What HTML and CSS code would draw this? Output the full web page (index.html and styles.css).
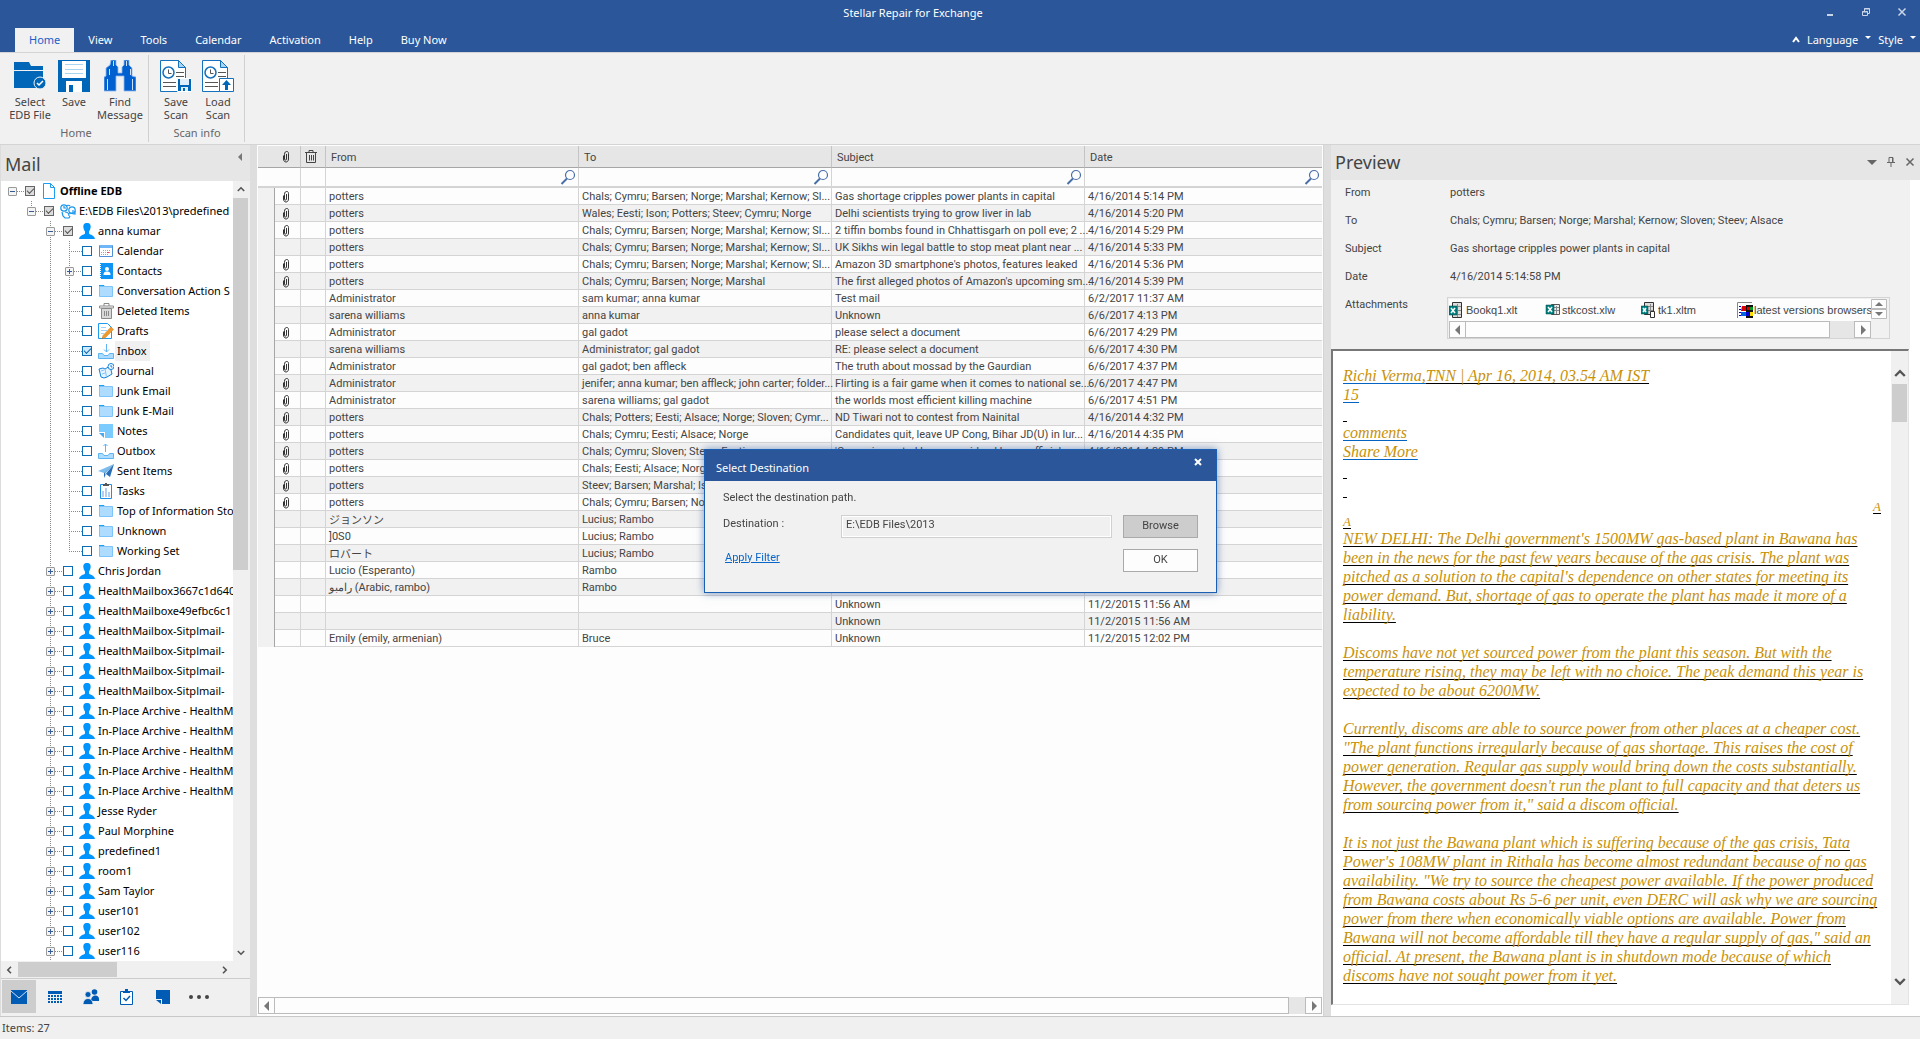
FILE: index.html
```html
<!DOCTYPE html>
<html lang="en">
<head>
<meta charset="utf-8">
<title>Stellar Repair for Exchange</title>
<link rel="stylesheet" href="styles.css">
</head>
<body>
<svg class="defs" aria-hidden="true">
  <symbol id="user" viewBox="0 0 16 16"><path fill="#0094ff" d="M8 0c3 0 4 2 3.600 4.500C11.400 6.500 10.500 7.500 10 8.500v2c1 1.500 5.500 1.500 6 5.500H0c.5-4 5-4 6-5.500v-2C5.500 7.500 4.600 6.500 4.400 4.500 4 2 5 0 8 0z"/></symbol>
  <symbol id="folder" viewBox="0 0 16 16"><path fill="#1e9df0" d="M1 2h5l1 2H1z"/><path fill="#addcff" stroke="#7cc4fa" d="M1.500 3.500h13v10h-13z"/></symbol>
  <symbol id="doc" viewBox="0 0 16 16"><path fill="#fff" stroke="#1e9df0" d="M2.500.5h7l4 4v11H2.500zM9.500.5v4h4"/></symbol>
  <symbol id="store" viewBox="0 0 16 16"><g fill="none" stroke="#1a96ee" stroke-width="1.200"><circle cx="4" cy="5" r="3.200"/><path d="M4 3v2h2M6 3c1-1 3-1 4 0M2 9l1 4 2 2h4l1-2M13 10V7"/><circle cx="12" cy="7" r="3.200"/><path d="M5 9c2 0 4 1 4 4M9 10l6 1v-3"/></g></symbol>
  <symbol id="calendar" viewBox="0 0 16 16"><path fill="#fff" stroke="#4e8fd8" d="M1.500 2.500h13v11h-13z"/><path fill="#6eb6f5" d="M2 2h12v3H2z"/><g fill="none" stroke="#a3a8b0" stroke-dasharray="1 1"><path d="M5 7.500h8M3 9.500h10M3 11.500h8"/></g><path fill="#e44" d="M9 9h2v1H9z"/></symbol>
  <symbol id="contacts" viewBox="0 0 16 16"><path fill="#0f93f5" d="M3 0h12v16H3z"/><path stroke="#0f93f5" stroke-width="2" stroke-dasharray="1 1" d="M3 0v16"/><circle cx="9" cy="6" r="2" fill="#fff"/><path fill="#fff" d="M5.500 12c0-3 1.500-3.500 3.500-3.500s3.500.5 3.500 3.500z"/></symbol>
  <symbol id="trash" viewBox="0 0 16 16"><path fill="#d9d9d9" stroke="#8a8a8a" d="M3.500 5.500h10v10h-10z"/><path fill="none" stroke="#8a8a8a" d="M1.500 3v2h14V3zM6 3V.5h5V3M6.500 8v5M8.500 8v5M10.500 8v5"/></symbol>
  <symbol id="drafts" viewBox="0 0 16 16"><path fill="#fff" stroke="#1e9df0" d="M.5.500h9l4 4v11H.500z"/><path stroke="#9bd2fb" d="M3 4.500h5M3 7.500h6M3 10.500h3"/><path fill="#f09a2c" stroke="#c97a1c" stroke-width=".5" d="M13 4l2.500 2.500-8 8L4 16l1-3.500z"/><path fill="#777" d="M4 16l.5-1.500 1 1z"/></symbol>
  <symbol id="inbox" viewBox="0 0 16 16"><path fill="#addcff" stroke="#5fb4f4" d="M.5 10.500h4l1.500 2h4l1.500-2h4v5H.500z"/><path fill="none" stroke="#5fb4f4" d="M8.500 1v8M6 6.500L8.500 9 11 6.500"/></symbol>
  <symbol id="outbox" viewBox="0 0 16 16"><path fill="#addcff" stroke="#5fb4f4" d="M.5 10.500h4l1.500 2h4l1.500-2h4v5H.500z"/><path fill="none" stroke="#5fb4f4" d="M7.500 9V1M5.500 3l2-2 2 2"/></symbol>
  <symbol id="journal" viewBox="0 0 16 16"><path fill="#e6f4ff" stroke="#1482dc" d="M1 6l4-1 2 1 5-3 2 8-5 3-3 1-3-1z"/><path fill="none" stroke="#7cc4fa" d="M7 6l1.500 8M3 8l3-1M4 11l3-1"/><circle cx="13" cy="3.500" r="3" fill="#fff" stroke="#1482dc"/><path fill="none" stroke="#1482dc" d="M13 2v2h1.500"/></symbol>
  <symbol id="notes" viewBox="0 0 16 16"><path fill="#7ccbff" d="M1 1h14v14H7V9H1z"/><path fill="#4aa9ee" d="M1 10h5v5z"/></symbol>
  <symbol id="sent" viewBox="0 0 16 16"><path fill="#7cbdf0" d="M0 8L16 1 6 10z"/><path fill="#2a6fb5" d="M16 1l-4 13-4-3-2 4V10z"/><path fill="#c9e6fc" d="M16 1L7 10v2z"/></symbol>
  <symbol id="tasks" viewBox="0 0 16 16"><path fill="#fff" stroke="#1e8fe6" d="M2.500 1.500h11v14h-11z"/><path fill="#555" d="M5 3V1h2V0h2v1h2v2z"/><path fill="#b6cdf2" d="M4 8h2v6H4zM7 5h2v9H7zM10 9h2v5h-2z"/></symbol>
  <symbol id="clip" viewBox="0 0 8 12"><path fill="none" stroke="#333" d="M2.500 3.500v4.500c0 1.500 2 1.500 2 0V3M6.500 2.500v5.500c0 4-5 4-5 0M1.500 8V4.500M2.500 3.500c0-4 4-4 4-1"/></symbol>
  <symbol id="bin" viewBox="0 0 12 13"><path fill="none" stroke="#444" d="M1.500 3v9.500h9V3M0 2.500h12M4 2V.5h4V2M4.500 5v5.500M6.500 5v5.500M8.500 5v5.500"/></symbol>
  <symbol id="search" viewBox="0 0 16 16"><circle cx="10" cy="6" r="4.500" fill="none" stroke="#4a6ea8" stroke-width="1.200"/><path stroke="#4a6ea8" stroke-width="2" d="M7 9.500L1.500 15"/></symbol>
  <symbol id="left" viewBox="0 0 8 12"><path fill="#777" d="M6 1v10L1 6z"/></symbol>
  <symbol id="right" viewBox="0 0 8 12"><path fill="#777" d="M2 1v10l5-5z"/></symbol>
  <symbol id="chev" viewBox="0 0 10 10"><path fill="none" stroke="#555" stroke-width="2" d="M1 7.500l4-4 4 4"/></symbol>
</svg>

<header class="titlebar">
  <h1>Stellar Repair for Exchange</h1>
  <div class="winbuttons">
    <button aria-label="Minimize"><svg width="10" height="10"><path fill="#c9d5e8" d="M2 7h6v2H2z"/></svg></button>
    <button aria-label="Restore"><svg width="10" height="10"><path fill="none" stroke="#c9d5e8" d="M1.500 4.500h5v4h-5zM3.500 4V1.500h5v5H7M3 2h6M1 5h6"/></svg></button>
    <button aria-label="Close"><svg width="10" height="10"><path stroke="#c9d5e8" stroke-width="1.500" d="M1.500 1.500l7 7M8.500 1.500l-7 7"/></svg></button>
  </div>
</header>
<nav class="tabs">
  <button class="on">Home</button><button>View</button><button>Tools</button><button>Calendar</button><button>Activation</button><button>Help</button><button>Buy Now</button>
  <div class="tabs-right">
    <button aria-label="Collapse ribbon"><svg width="8" height="8"><path fill="none" stroke="#fff" stroke-width="2" d="M1 6l3-4 3 4"/></svg></button>
    <button>Language</button><svg width="6" height="10"><path fill="#fff" d="M0 1h6L3 4z"/></svg>
    <button>Style</button><svg width="6" height="10"><path fill="#fff" d="M0 1h6L3 4z"/></svg>
  </div>
</nav>

<section class="ribbon">
  <div class="group">
    <div class="tools">
      <button class="w-select"><svg width="32" height="32"><path fill="#0067b8" d="M0 2h15l2 4h12v4H0zM0 11h29v17H0z"/><circle cx="26" cy="23" r="6" fill="#0067b8" stroke="#f1f1f1" stroke-width="1"/><path fill="none" stroke="#fff" stroke-width="1.500" d="M23 23l2 2 4-4"/></svg>Select<br>EDB File</button>
      <button class="w-save"><svg width="32" height="32"><path fill="#0067b8" d="M0 0h32v32H0z"/><path fill="#fff" d="M4 1h24v17H4zM8 21h16v11h-9v-7h-4v7H8z"/><path stroke="#a9d4f2" d="M7 4.500h18M7 9.500h18M7 13.500h18"/></svg>Save</button>
      <button class="w-find"><svg width="32" height="32"><path fill="#0060d0" stroke="#8fb9ee" stroke-width=".8" d="M7 0h5v5l2 2v6h4V7l2-2V0h5v5l3 3v8l4 1v14H20V16h-8v15H0V17l2-1V8l4-3z"/><path stroke="#cfe2fa" d="M5.500 9v6M3.500 19v11M26.500 9v6M28.500 19v11M9.500 1v5M22.500 1v5"/></svg>Find<br>Message</button>
    </div>
    <div class="caption">Home</div>
  </div>
  <div class="group scan">
    <div class="tools">
      <button class="w-scan"><svg width="32" height="32"><path fill="#fff" stroke="#1570bd" d="M.5.5h18l7 7v24H.500z"/><path fill="#a9d4f2" stroke="#1570bd" d="M18.500.5v7h7z"/><circle cx="8.500" cy="12.500" r="5.500" fill="#fff" stroke="#1570bd" stroke-width="1.500"/><path fill="none" stroke="#555" d="M8.500 9.500v4h3M16 12.500h8M16 16.500h8M3 22.500h13M3 26.500h13"/><path fill="#0067b8" stroke="#fff" d="M17.500 18.500h14v13h-14z"/><path fill="#dff0fc" d="M20 19h9v6h-9zM21 27h7v4h-3v-3h-2v3h-2z"/></svg>Save<br>Scan</button>
      <button class="w-scan"><svg width="32" height="32"><path fill="#fff" stroke="#1570bd" d="M.5.5h18l7 7v24H.500z"/><path fill="#a9d4f2" stroke="#1570bd" d="M18.500.5v7h7z"/><circle cx="8.500" cy="12.500" r="5.500" fill="#fff" stroke="#1570bd" stroke-width="1.500"/><path fill="none" stroke="#555" d="M8.500 9.500v4h3M16 12.500h8M16 16.500h8M3 22.500h13M3 26.500h13"/><path fill="#fff" stroke="#1570bd" d="M17.500 18.500h14v13h-14z"/><path fill="#0067b8" d="M24.500 20l4.500 5h-3v5h-3v-5h-3z"/></svg>Load<br>Scan</button>
    </div>
    <div class="caption">Scan info</div>
  </div>
</section>

<main>
  <aside class="mail">
    <header><h2>Mail</h2><button aria-label="Collapse"><svg width="6" height="8"><path fill="#777" d="M5 0v8L1 4z"/></svg></button></header>
    <div class="treewrap">
      <ul class="tree">
        <li class="l0"><button class="ex" aria-label="Collapse"></button><i></i><label><input type="checkbox" class="part" checked><svg><use href="#doc"/></svg><b>Offline EDB</b></label></li>
        <li class="l1"><button class="ex" aria-label="Collapse"></button><i></i><label><input type="checkbox" class="part" checked><svg><use href="#store"/></svg><span>E:\EDB Files\2013\predefined</span></label></li>
        <li class="l2"><button class="ex" aria-label="Collapse"></button><i></i><label><input type="checkbox" class="part" checked><svg><use href="#user"/></svg><span>anna kumar</span></label></li>
        <li class="l3"><i class="leaf"></i><label><input type="checkbox"><svg><use href="#calendar"/></svg><span>Calendar</span></label></li>
        <li class="l3"><button class="ex plus" aria-label="Expand"></button><i></i><label><input type="checkbox"><svg><use href="#contacts"/></svg><span>Contacts</span></label></li>
        <li class="l3"><i class="leaf"></i><label><input type="checkbox"><svg><use href="#folder"/></svg><span>Conversation Action S</span></label></li>
        <li class="l3"><i class="leaf"></i><label><input type="checkbox"><svg><use href="#trash"/></svg><span>Deleted Items</span></label></li>
        <li class="l3"><i class="leaf"></i><label><input type="checkbox"><svg><use href="#drafts"/></svg><span>Drafts</span></label></li>
        <li class="l3 sel"><i class="leaf"></i><label><input type="checkbox" checked><svg><use href="#inbox"/></svg><span>Inbox</span></label></li>
        <li class="l3"><i class="leaf"></i><label><input type="checkbox"><svg><use href="#journal"/></svg><span>Journal</span></label></li>
        <li class="l3"><i class="leaf"></i><label><input type="checkbox"><svg><use href="#folder"/></svg><span>Junk Email</span></label></li>
        <li class="l3"><i class="leaf"></i><label><input type="checkbox"><svg><use href="#folder"/></svg><span>Junk E-Mail</span></label></li>
        <li class="l3"><i class="leaf"></i><label><input type="checkbox"><svg><use href="#notes"/></svg><span>Notes</span></label></li>
        <li class="l3"><i class="leaf"></i><label><input type="checkbox"><svg><use href="#outbox"/></svg><span>Outbox</span></label></li>
        <li class="l3"><i class="leaf"></i><label><input type="checkbox"><svg><use href="#sent"/></svg><span>Sent Items</span></label></li>
        <li class="l3"><i class="leaf"></i><label><input type="checkbox"><svg><use href="#tasks"/></svg><span>Tasks</span></label></li>
        <li class="l3"><i class="leaf"></i><label><input type="checkbox"><svg><use href="#folder"/></svg><span>Top of Information Sto</span></label></li>
        <li class="l3"><i class="leaf"></i><label><input type="checkbox"><svg><use href="#folder"/></svg><span>Unknown</span></label></li>
        <li class="l3 end"><i class="leaf"></i><label><input type="checkbox"><svg><use href="#folder"/></svg><span>Working Set</span></label></li>
        <li class="l2"><button class="ex plus" aria-label="Expand"></button><i></i><label><input type="checkbox"><svg><use href="#user"/></svg><span>Chris Jordan</span></label></li>
        <li class="l2"><button class="ex plus" aria-label="Expand"></button><i></i><label><input type="checkbox"><svg><use href="#user"/></svg><span>HealthMailbox3667c1d640</span></label></li>
        <li class="l2"><button class="ex plus" aria-label="Expand"></button><i></i><label><input type="checkbox"><svg><use href="#user"/></svg><span>HealthMailboxe49efbc6c1</span></label></li>
        <li class="l2"><button class="ex plus" aria-label="Expand"></button><i></i><label><input type="checkbox"><svg><use href="#user"/></svg><span>HealthMailbox-Sitplmail-</span></label></li>
        <li class="l2"><button class="ex plus" aria-label="Expand"></button><i></i><label><input type="checkbox"><svg><use href="#user"/></svg><span>HealthMailbox-Sitplmail-</span></label></li>
        <li class="l2"><button class="ex plus" aria-label="Expand"></button><i></i><label><input type="checkbox"><svg><use href="#user"/></svg><span>HealthMailbox-Sitplmail-</span></label></li>
        <li class="l2"><button class="ex plus" aria-label="Expand"></button><i></i><label><input type="checkbox"><svg><use href="#user"/></svg><span>HealthMailbox-Sitplmail-</span></label></li>
        <li class="l2"><button class="ex plus" aria-label="Expand"></button><i></i><label><input type="checkbox"><svg><use href="#user"/></svg><span>In-Place Archive - HealthM</span></label></li>
        <li class="l2"><button class="ex plus" aria-label="Expand"></button><i></i><label><input type="checkbox"><svg><use href="#user"/></svg><span>In-Place Archive - HealthM</span></label></li>
        <li class="l2"><button class="ex plus" aria-label="Expand"></button><i></i><label><input type="checkbox"><svg><use href="#user"/></svg><span>In-Place Archive - HealthM</span></label></li>
        <li class="l2"><button class="ex plus" aria-label="Expand"></button><i></i><label><input type="checkbox"><svg><use href="#user"/></svg><span>In-Place Archive - HealthM</span></label></li>
        <li class="l2"><button class="ex plus" aria-label="Expand"></button><i></i><label><input type="checkbox"><svg><use href="#user"/></svg><span>In-Place Archive - HealthM</span></label></li>
        <li class="l2"><button class="ex plus" aria-label="Expand"></button><i></i><label><input type="checkbox"><svg><use href="#user"/></svg><span>Jesse Ryder</span></label></li>
        <li class="l2"><button class="ex plus" aria-label="Expand"></button><i></i><label><input type="checkbox"><svg><use href="#user"/></svg><span>Paul Morphine</span></label></li>
        <li class="l2"><button class="ex plus" aria-label="Expand"></button><i></i><label><input type="checkbox"><svg><use href="#user"/></svg><span>predefined1</span></label></li>
        <li class="l2"><button class="ex plus" aria-label="Expand"></button><i></i><label><input type="checkbox"><svg><use href="#user"/></svg><span>room1</span></label></li>
        <li class="l2"><button class="ex plus" aria-label="Expand"></button><i></i><label><input type="checkbox"><svg><use href="#user"/></svg><span>Sam Taylor</span></label></li>
        <li class="l2"><button class="ex plus" aria-label="Expand"></button><i></i><label><input type="checkbox"><svg><use href="#user"/></svg><span>user101</span></label></li>
        <li class="l2"><button class="ex plus" aria-label="Expand"></button><i></i><label><input type="checkbox"><svg><use href="#user"/></svg><span>user102</span></label></li>
        <li class="l2"><button class="ex plus" aria-label="Expand"></button><i></i><label><input type="checkbox"><svg><use href="#user"/></svg><span>user116</span></label></li>
      </ul>
      <div class="vscroll"><svg class="chev"><use href="#chev"/></svg><div class="thumb"></div><div class="rest"></div><svg class="chev down"><use href="#chev"/></svg></div>
    </div>
    <div class="hscroll"><svg class="chev lt"><use href="#chev"/></svg><div class="thumb"></div><div class="rest"></div><svg class="chev rt"><use href="#chev"/></svg></div>
    <nav class="modules">
      <button class="on" aria-label="Mail"><svg width="16" height="14"><path fill="#005bb5" d="M0 0h16v14H0z"/><path fill="none" stroke="#cfe0f3" d="M0 1l8 7 8-7"/></svg></button>
      <button aria-label="Calendar"><svg width="14" height="14"><path fill="#005bb5" d="M0 1h14v3H0z"/><g stroke="#005bb5" stroke-width="2" stroke-dasharray="2 1"><path d="M0 6h14M0 9h14M0 12h14"/></g></svg></button>
      <button aria-label="People"><svg width="16" height="16"><g fill="#005bb5"><circle cx="11.500" cy="3" r="2.800"/><path d="M8 12c0-7 8-7 8-2v2z"/></g><g fill="#005bb5" stroke="#f0f0f0" stroke-width=".8"><circle cx="5" cy="5.500" r="3"/><path d="M0 15.500c0-8 10-8 10 0z"/></g></svg></button>
      <button aria-label="Tasks"><svg width="14" height="16"><path fill="#fff" stroke="#005bb5" d="M.5 2.500h12v13H.500z"/><path fill="#005bb5" d="M3 4V2h2V0h3v2h2v2z"/><path fill="none" stroke="#005bb5" stroke-width="1.500" d="M3.500 9L6 11.500 10 7"/></svg></button>
      <button aria-label="Notes"><svg width="14" height="14"><path fill="#005bb5" d="M0 0h14v14H6V9H0zM0 10h5v4z"/></svg></button>
      <button aria-label="More"><svg width="20" height="4"><g fill="#444"><circle cx="2" cy="2" r="2"/><circle cx="10" cy="2" r="2"/><circle cx="18" cy="2" r="2"/></g></svg></button>
    </nav>
  </aside>

  <section class="list">
    <table>
      <colgroup><col class="c-gut"><col class="c-att"><col class="c-del"><col class="c-txt"><col class="c-txt"><col class="c-txt"><col></colgroup>
      <thead>
        <tr class="head"><th></th><th class="ic"><svg width="8" height="12"><use href="#clip"/></svg></th><th class="ic"><svg width="12" height="13"><use href="#bin"/></svg></th><th>From</th><th>To</th><th>Subject</th><th>Date</th></tr>
        <tr class="filter"><td></td><td></td><td></td>
          <td><div><input aria-label="Filter From"><svg width="16" height="16"><use href="#search"/></svg></div></td>
          <td><div><input aria-label="Filter To"><svg width="16" height="16"><use href="#search"/></svg></div></td>
          <td><div><input aria-label="Filter Subject"><svg width="16" height="16"><use href="#search"/></svg></div></td>
          <td><div><input aria-label="Filter Date"><svg width="16" height="16"><use href="#search"/></svg></div></td></tr>
      </thead>
      <tbody>
        <tr><td></td><td><svg><use href="#clip"/></svg></td><td></td><td>potters</td><td>Chals; Cymru; Barsen; Norge; Marshal; Kernow; Sl...</td><td>Gas shortage cripples power plants in capital</td><td>4/16/2014 5:14 PM</td></tr>
        <tr><td></td><td><svg><use href="#clip"/></svg></td><td></td><td>potters</td><td>Wales; Eesti; Ison; Potters; Steev; Cymru; Norge</td><td>Delhi scientists trying to grow liver in lab</td><td>4/16/2014 5:20 PM</td></tr>
        <tr><td></td><td><svg><use href="#clip"/></svg></td><td></td><td>potters</td><td>Chals; Cymru; Barsen; Norge; Marshal; Kernow; Sl...</td><td>2 tiffin bombs found in Chhattisgarh on poll eve; 2 ...</td><td>4/16/2014 5:29 PM</td></tr>
        <tr><td></td><td></td><td></td><td>potters</td><td>Chals; Cymru; Barsen; Norge; Marshal; Kernow; Sl...</td><td>UK Sikhs win legal battle to stop meat plant near ...</td><td>4/16/2014 5:33 PM</td></tr>
        <tr><td></td><td><svg><use href="#clip"/></svg></td><td></td><td>potters</td><td>Chals; Cymru; Barsen; Norge; Marshal; Kernow; Sl...</td><td>Amazon 3D smartphone's photos, features leaked</td><td>4/16/2014 5:36 PM</td></tr>
        <tr><td></td><td><svg><use href="#clip"/></svg></td><td></td><td>potters</td><td>Chals; Cymru; Barsen; Norge; Marshal</td><td>The first alleged photos of Amazon's upcoming sm...</td><td>4/16/2014 5:39 PM</td></tr>
        <tr><td></td><td></td><td></td><td>Administrator</td><td>sam kumar; anna kumar</td><td>Test mail</td><td>6/2/2017 11:37 AM</td></tr>
        <tr><td></td><td></td><td></td><td>sarena williams</td><td>anna kumar</td><td>Unknown</td><td>6/6/2017 4:13 PM</td></tr>
        <tr><td></td><td><svg><use href="#clip"/></svg></td><td></td><td>Administrator</td><td>gal gadot</td><td>please select a document</td><td>6/6/2017 4:29 PM</td></tr>
        <tr><td></td><td></td><td></td><td>sarena williams</td><td>Administrator; gal gadot</td><td>RE: please select a document</td><td>6/6/2017 4:30 PM</td></tr>
        <tr><td></td><td><svg><use href="#clip"/></svg></td><td></td><td>Administrator</td><td>gal gadot; ben affleck</td><td>The truth about mossad by the Gaurdian</td><td>6/6/2017 4:37 PM</td></tr>
        <tr><td></td><td><svg><use href="#clip"/></svg></td><td></td><td>Administrator</td><td>jenifer; anna kumar; ben affleck; john carter; folder...</td><td>Flirting is a fair game when it comes to national se...</td><td>6/6/2017 4:47 PM</td></tr>
        <tr><td></td><td><svg><use href="#clip"/></svg></td><td></td><td>Administrator</td><td>sarena williams; gal gadot</td><td>the worlds most efficient killing machine</td><td>6/6/2017 4:51 PM</td></tr>
        <tr><td></td><td><svg><use href="#clip"/></svg></td><td></td><td>potters</td><td>Chals; Potters; Eesti; Alsace; Norge; Sloven; Cymr...</td><td>ND Tiwari not to contest from Nainital</td><td>4/16/2014 4:32 PM</td></tr>
        <tr><td></td><td><svg><use href="#clip"/></svg></td><td></td><td>potters</td><td>Chals; Cymru; Eesti; Alsace; Norge</td><td>Candidates quit, leave UP Cong, Bihar JD(U) in lur...</td><td>4/16/2014 4:35 PM</td></tr>
        <tr><td></td><td><svg><use href="#clip"/></svg></td><td></td><td>potters</td><td>Chals; Cymru; Sloven; Steev; Eesti</td><td>'Campaign noted because sidned by an official</td><td>4/16/2014 4:39 PM</td></tr>
        <tr><td></td><td><svg><use href="#clip"/></svg></td><td></td><td>potters</td><td>Chals; Eesti; Alsace; Norge</td><td></td><td></td></tr>
        <tr><td></td><td><svg><use href="#clip"/></svg></td><td></td><td>potters</td><td>Steev; Barsen; Marshal; Ison</td><td></td><td></td></tr>
        <tr><td></td><td><svg><use href="#clip"/></svg></td><td></td><td>potters</td><td>Chals; Cymru; Barsen; Norge</td><td></td><td></td></tr>
        <tr><td></td><td></td><td></td><td lang="ja">ジョンソン</td><td>Lucius; Rambo</td><td></td><td></td></tr>
        <tr><td></td><td></td><td></td><td>]0S0</td><td>Lucius; Rambo</td><td></td><td></td></tr>
        <tr><td></td><td></td><td></td><td lang="ja">ロバート</td><td>Lucius; Rambo</td><td></td><td></td></tr>
        <tr><td></td><td></td><td></td><td>Lucio (Esperanto)</td><td>Rambo</td><td></td><td></td></tr>
        <tr><td></td><td></td><td></td><td><bdi lang="ar">رامبو</bdi> (Arabic, rambo)</td><td>Rambo</td><td></td><td></td></tr>
        <tr><td></td><td></td><td></td><td></td><td></td><td>Unknown</td><td>11/2/2015 11:56 AM</td></tr>
        <tr><td></td><td></td><td></td><td></td><td></td><td>Unknown</td><td>11/2/2015 11:56 AM</td></tr>
        <tr><td></td><td></td><td></td><td>Emily (emily, armenian)</td><td>Bruce</td><td>Unknown</td><td>11/2/2015 12:02 PM</td></tr>
      </tbody>
    </table>
    <div class="boxscroll"><div class="btn"><svg><use href="#left"/></svg></div><div class="bar"></div><div class="gap"></div><div class="btn"><svg><use href="#right"/></svg></div></div>
  </section>

  <section class="preview">
    <header><h2>Preview</h2>
      <button aria-label="Menu"><svg width="10" height="10"><path fill="#666" d="M0 3h10L5 8z"/></svg></button>
      <button aria-label="Pin"><svg width="10" height="10"><path fill="none" stroke="#666" d="M3 5.500V.5h4v5M1 5.500h8M6.500 1v5M5 6v4"/></svg></button>
      <button aria-label="Close"><svg width="10" height="10"><path stroke="#666" stroke-width="1.500" d="M1.500 1.500l7 7M8.500 1.500l-7 7"/></svg></button>
    </header>
    <div class="info">
      <dl>
        <dt>From</dt><dd>potters</dd>
        <dt>To</dt><dd>Chals; Cymru; Barsen; Norge; Marshal; Kernow; Sloven; Steev; Alsace</dd>
        <dt>Subject</dt><dd>Gas shortage cripples power plants in capital</dd>
        <dt>Date</dt><dd>4/16/2014 5:14:58 PM</dd>
        <dt>Attachments</dt>
        <dd class="attach">
          <div class="files">
            <span><svg width="16" height="16"><path fill="#ddd" stroke="#333" d="M3.500.5h9v15h-9z"/><path stroke="#888" d="M4 4.500h8M4 8.500h8M4 12.500h8M8.500 2v13"/><path fill="#008080" stroke="#044" stroke-width=".5" d="M0 4h8v9H0z"/><path stroke="#fff" stroke-width="1.500" d="M2 6l4 5M6 6l-4 5"/></svg>Bookq1.xlt</span>
            <span><svg width="16" height="16"><path fill="#eee" stroke="#555" d="M6.500 2.500h8v10h-8z"/><path stroke="#888" d="M8 5.500h6M8 8.500h6M11.500 4v8"/><path fill="#008080" stroke="#044" stroke-width=".5" d="M1 3h8v9H1z"/><path stroke="#fff" stroke-width="1.500" d="M3 5l4 5M7 5l-4 5"/></svg>stkcost.xlw</span>
            <span><svg width="16" height="16"><path fill="#ddd" stroke="#333" d="M3.500.5h9v12h-9z"/><path stroke="#888" d="M4 4.500h8M4 8.500h8M9.500 2v10"/><path fill="#008080" stroke="#044" stroke-width=".5" d="M0 4h7v8H0z"/><path stroke="#fff" stroke-width="1.500" d="M2 6l3 4M5 6l-3 4"/><path fill="#fff" stroke="#333" d="M9.500 9.500h4v6h-4z"/></svg>tk1.xltm</span>
            <span><svg width="16" height="16"><path fill="none" stroke="#888" d="M.5 16V.5H15"/><path stroke="#00c" stroke-dasharray="1 2" stroke-width="2" d="M3 4v11"/><path fill="#d00" d="M5 4h4v5H4z"/><path fill="#06d" d="M4 10h5v4H4z"/><path fill="#111" d="M9 3h7v13H9z"/><path fill="#d00" d="M10 5h3v3h-3z"/><path fill="#092" d="M13 5h3v3h-3z"/><path fill="#00d" d="M9 10h4v4H9z"/><path fill="#fd0" d="M13 10h3v4h-3z"/></svg>latest versions browsers</span>
          </div>
          <div class="spin"><svg width="16" height="10"><path fill="#fdfdfd" stroke="#bbb" d="M.5.5h15v9H.500z"/><path fill="#777" d="M4 7h8L8 3z"/></svg><svg width="16" height="10"><path fill="#fdfdfd" stroke="#bbb" d="M.5.500h15v9H.500z"/><path fill="#777" d="M4 3h8L8 7z"/></svg></div>
          <div class="boxscroll small"><div class="btn"><svg><use href="#left"/></svg></div><div class="bar"></div><div class="gap"></div><div class="btn"><svg><use href="#right"/></svg></div></div>
        </dd>
      </dl>
    </div>
    <div class="docrow">
      <div class="doc">
        <article>
          <p><a href="#">Richi Verma,</a><u>TNN | Apr 16, 2014, 03.54 AM IST</u></p>
          <p><a href="#">15</a></p>
          <p><u>&nbsp;</u></p>
          <p><a href="#">comments</a></p>
          <p><a href="#">Share More</a></p>
          <p><u>&nbsp;</u></p>
          <p><u>&nbsp;</u></p>
          <p class="sm r"><u>A</u></p>
          <p class="sm"><u>A</u></p>
          <p class="gapped"><u>NEW DELHI: The Delhi government's 1500MW gas-based plant in Bawana has<br>been in the news for the past few years because of the gas crisis. The plant was<br>pitched as a solution to the capital's dependence on other states for meeting its<br>power demand. But, shortage of gas to operate the plant has made it more of a<br>liability.</u></p>
          <p class="gapped"><u>Discoms have not yet sourced power from the plant this season. But with the<br>temperature rising, they may be left with no choice. The peak demand this year is<br>expected to be about 6200MW.</u></p>
          <p class="gapped"><u>Currently, discoms are able to source power from other places at a cheaper cost.<br>"The plant functions irregularly because of gas shortage. This raises the cost of<br>power generation. Regular gas supply would bring down the costs substantially.<br>However, the government doesn't run the plant to full capacity and that deters us<br>from sourcing power from it," said a discom official.</u></p>
          <p><u>It is not just the Bawana plant which is suffering because of the gas crisis, Tata<br>Power's 108MW plant in Rithala has become almost redundant because of no gas<br>availability. "We try to source the cheapest power available. If the power produced<br>from Bawana costs about Rs 5-6 per unit, even DERC will ask why we are sourcing<br>power from there when economically viable options are available. Power from<br>Bawana will not become affordable till they have a regular supply of gas," said an<br>official. At present, the Bawana plant is in shutdown mode because of which<br>discoms have not sought power from it yet.</u></p>
        </article>
        <div class="vscroll docscroll"><svg class="chev"><use href="#chev"/></svg><div class="thumb"></div><div class="rest"></div><svg class="chev down"><use href="#chev"/></svg></div>
      </div>
    </div>
  </section>
</main>
<footer>Items: 27</footer>

<div class="overlay">
  <div class="dialog" role="dialog" aria-labelledby="dlg-title">
    <header><h2 id="dlg-title">Select Destination</h2><button aria-label="Close"><svg width="8" height="8"><path stroke="#fff" stroke-width="2" d="M1 1l6 6M7 1L1 7"/></svg></button></header>
    <form>
      <p>Select the destination path.</p>
      <label for="dest">Destination :</label>
      <input id="dest" type="text" value="E:\EDB Files\2013" readonly>
      <button type="button" class="browse">Browse</button>
      <a href="#">Apply Filter</a>
      <button type="button" class="ok">OK</button>
    </form>
  </div>
</div>
</body>
</html>
```
FILE: styles.css
```css
* { box-sizing: border-box; }
body {
  margin: 0;
  height: 100vh;
  display: flex;
  flex-direction: column;
  overflow: hidden;
  background: #f0f0f0;
  color: #444;
  font: 11px/14px "Noto Sans", "Open Sans", sans-serif;
}
button {
  border: 0;
  padding: 0;
  background: none;
  color: inherit;
  font: inherit;
}
h1, h2, p, ul, dl, dd { margin: 0; padding: 0; font-weight: normal; }
svg { display: block; flex: none; }
.defs { position: absolute; width: 0; height: 0; }

/* Title bar and tabs */
.titlebar {
  flex: none;
  display: grid;
  grid-template-columns: 1fr auto 1fr;
  align-items: center;
  height: 28px;
  background: #2b579a;
  color: #fff;
}
.titlebar h1 { grid-column: 2; font-size: 11px; line-height: 14px; margin: 0 94px 2px 0; }
.winbuttons { display: flex; justify-content: flex-end; gap: 26px; padding: 0 13px 4px; }
.tabs {
  flex: none;
  display: flex;
  align-items: stretch;
  height: 24px;
  padding-left: 15px;
  background: #2b579a;
  color: #fff;
}
.tabs > button { padding: 0 14px; }
.tabs > .on { background: #f1f1f1; color: #1a5fc8; }
.tabs-right { display: flex; align-items: center; gap: 7px; margin-left: auto; padding-right: 4px; }

/* Ribbon */
.ribbon {
  flex: none;
  display: flex;
  height: 93px;
  padding: 2px 0;
  background: #f1f1f1;
  border-top: 1px solid #d4d4d4;
  border-bottom: 1px solid #d4d4d4;
}
.group {
  display: flex;
  flex-direction: column;
  justify-content: space-between;
  border-right: 1px solid #d0d0d0;
  padding: 5px 4px 2px 8px;
}
.group.scan { padding: 5px 5px 2px 6px; }
.tools { display: flex; line-height: 13px; }
.tools button { display: flex; flex-direction: column; align-items: center; justify-content: flex-start; }
.tools svg { margin-bottom: 3px; }
.w-select { width: 44px; }
.w-save { width: 44px; }
.w-find { width: 48px; }
.w-scan { width: 42px; }
.caption { text-align: center; color: #666; }

main {
  flex: 1;
  min-height: 0;
  display: grid;
  grid-template-columns: 250px minmax(0, 1fr) 589px;
  column-gap: 7px;
  background: #dedede;
}

/* Mail tree */
.mail {
  display: flex;
  flex-direction: column;
  min-height: 0;
  background: #f0f0f0;
  border-left: 1px solid #dcdcdc;
}
.mail > header, .preview > header {
  flex: none;
  display: flex;
  align-items: center;
  height: 36px;
  background: #e6e6e6;
}
h2 { font-size: 18px; line-height: 24px; }
.mail > header { justify-content: space-between; padding: 2px 7px 0 4px; }
.mail > header button { margin-bottom: 14px; }
.treewrap { flex: 1; min-height: 0; display: flex; padding-right: 2px; }
.tree {
  flex: 1;
  min-width: 0;
  overflow: hidden;
  list-style: none;
  background: #fff;
  color: #000;
}
.tree li {
  display: flex;
  align-items: center;
  height: 20px;
  white-space: nowrap;
  background-repeat: no-repeat;
}
.tree li > * { flex: none; }
.tree label { display: flex; align-items: center; }
.tree label svg { width: 16px; height: 16px; margin: 0 1px 0 6px; }
.tree span, .tree b { line-height: 20px; padding: 0 3px 0 2px; }
.tree .sel span { background: #f0f0f0; }
.l0 { padding-left: 7px; }
.l1 { padding-left: 26px; background-image: repeating-linear-gradient(#888 0 1px, #fff 1px 2px); background-size: 1px 10px; background-position: 30px 0; }
.l2 { padding-left: 45px; background-image: repeating-linear-gradient(#888 0 1px, #fff 1px 2px); background-size: 1px 20px; background-position: 49px 0; }
.l3 { padding-left: 64px; background-image: repeating-linear-gradient(#888 0 1px, #fff 1px 2px), repeating-linear-gradient(#888 0 1px, #fff 1px 2px); background-size: 1px 20px; background-position: 49px 0, 68px 0; }
.l3.end { background-size: 1px 20px, 1px 10px; }
.tree i { width: 8px; height: 1px; background: repeating-linear-gradient(90deg, #888 0 1px, #fff 1px 2px); }
.tree i.leaf { width: 13px; margin-left: 4px; }
.ex {
  width: 9px;
  height: 9px;
  border: 1px solid #999;
  border-radius: 1px;
  background: linear-gradient(#335a9a, #335a9a) center / 5px 1px no-repeat #f4f4f4;
}
.ex.plus { background: linear-gradient(#335a9a, #335a9a) center / 5px 1px no-repeat, linear-gradient(#335a9a, #335a9a) center / 1px 5px no-repeat #f4f4f4; }
.tree input {
  appearance: none;
  flex: none;
  width: 10px;
  height: 10px;
  margin: 0;
  border: 1px solid #0a6cb4;
  background: #fff;
}
.tree input:checked { background: #cfeafc; }
.tree input:checked::before {
  content: "";
  display: block;
  width: 6px;
  height: 3px;
  margin: 1px;
  border: solid #0a6cb4;
  border-width: 0 0 1px 1px;
  transform: rotate(-45deg);
}
.tree input.part { border-color: #666; background: #ddd; }
.tree input.part::before { border-color: #555; }
.vscroll, .hscroll { flex: none; display: flex; align-items: center; background: #f0f0f0; }
.vscroll { width: 15px; flex-direction: column; padding: 4px 0; }
.hscroll { height: 17px; width: 232px; padding: 0 4px; }
.chev { width: 8px; height: 8px; }
.down { transform: rotate(180deg); }
.lt { transform: rotate(-90deg); }
.rt { transform: rotate(90deg); }
.thumb { background: #cdcdcd; }
.vscroll .thumb { width: 15px; flex: 373; margin-top: 5px; }
.vscroll .rest { flex: 380; }
.hscroll .thumb { height: 15px; flex: 98; margin-left: 5px; }
.hscroll .rest { flex: 102; }
.modules {
  flex: none;
  display: flex;
  height: 38px;
  gap: 2px;
  padding: 1px 1px 3px;
  border-top: 1px solid #ccc;
}
.modules button { width: 34px; display: grid; place-items: center; }
.modules .on { background: #cdcdcd; }

/* Message list */
.list {
  display: flex;
  flex-direction: column;
  min-width: 0;
  padding: 1px 1px 0;
  background: #fdfdfd;
  border: 1px solid #d4d4d4;
  border-width: 0 1px 0 0;
  font-family: Roboto, "Liberation Sans", "Noto Sans CJK JP", sans-serif;
}
.list table { table-layout: fixed; width: 100%; border-spacing: 0; }
.c-gut { width: 17px; }
.c-att { width: 26px; }
.c-del { width: 25px; }
.c-txt { width: 253px; }
.list th, .list td { padding: 0; text-align: left; font-weight: normal; white-space: nowrap; }
.head th {
  height: 22px;
  padding: 2px 5px 0;
  background: #e6e6e6;
  border-right: 1px solid #c4c4c4;
  border-bottom: 1px solid #a6a6a6;
  line-height: 19px;
}
.head th:first-child { border-right: 0; }
.list .head th:nth-child(n+4) { padding: 2px 5px 0; }
.head th.ic { padding: 0 4px 0 0; }
.head th:last-child { border-right: 0; }
.head .ic svg { margin: 0 auto; }
.filter td { height: 20px; border-right: 1px solid #d4d4d4; border-bottom: 2px solid #d4d4d4; }
.filter td:first-child, .filter td:last-child { border-right: 0; }
.filter td div { display: flex; align-items: center; height: 18px; padding-right: 2px; }
.filter input { flex: 1; min-width: 0; height: 16px; border: 0; padding: 0 3px; background: none; font: inherit; outline: 0; }
.list tbody td { height: 17px; padding-top: 1px; line-height: 15px; border-right: 1px solid #d4d4d4; border-bottom: 1px solid #d4d4d4; }
.list tbody td:nth-child(n+4) { padding-left: 3px; }
.list tbody td:first-child { background: #f1f1f1; border-right-color: #a6a6a6; border-bottom: 0; }
.list tbody td:last-child { border-right: 0; }
tbody tr:nth-child(even) { background: #f1f1f1; }
tbody svg { width: 8px; height: 12px; margin-left: 7px; }
tbody tr td[lang="ja"] { font-family: "Noto Sans CJK JP", sans-serif; }
.boxscroll { display: flex; height: 17px; background: #e6e6e6; }
.list .boxscroll { margin: auto 0 2px; }
.boxscroll .btn { width: 17px; display: grid; place-items: center; background: #fdfdfd; border: 1px solid #bbb; }
.boxscroll .btn svg { width: 8px; height: 12px; }
.boxscroll .bar { flex: 1; background: #fdfdfd; border: 1px solid #bbb; border-left: 0; }
.boxscroll .gap { width: 16px; }

/* Preview */
.preview { display: flex; flex-direction: column; min-height: 0; background: #fff; }
.preview > header { height: 35px; gap: 9px; padding: 0 5px 2px 4px; }
.preview > header h2 { margin-right: auto; }
.info {
  flex: none;
  margin-right: 10px;
  height: 169px;
  padding: 1px 20px 0 14px;
  background: #f1f1f1;
  font: 11px/14px Roboto, "Liberation Sans", sans-serif;
}
.info dl { display: grid; grid-template-columns: 102px 1fr; grid-auto-rows: 28px; }
.info dt { line-height: 24px; }
.info dd { line-height: 24px; padding-left: 3px; }
.info .attach {
  display: grid;
  grid-template-columns: 1fr 17px;
  height: 42px;
  margin-top: 4px;
  padding: 1px;
  border: 1px solid #d4d4d4;
}
.files { display: grid; grid-template-columns: repeat(4, 96px); width: 422px; background: #fdfdfd; font-family: "Liberation Sans", sans-serif; }
.files span { display: flex; align-items: center; height: 22px; white-space: nowrap; gap: 1px; }
.boxscroll.small .gap { width: 24px; }
.boxscroll.small { width: 422px; grid-column: 1; }
.docrow { flex: 1; min-height: 0; padding: 0 11px 11px 0; background: #fff; }
.doc {
  display: flex;
  height: 100%;
  overflow: hidden;
  border: 1px solid #e3e3e3;
  border-top: 2px solid #777;
  border-left: 2px solid #777;
}
article {
  flex: 1;
  min-width: 0;
  padding: 15px 10px 0 10px;
  font: italic 16px/19px "Liberation Serif", serif;
  color: #c7920a;
  white-space: nowrap;
}
article u { text-decoration-color: #000; text-underline-offset: 2px; text-decoration-thickness: 1px; text-decoration-skip-ink: none; }
article a { color: inherit; text-decoration: underline 1px #0563c1; text-underline-offset: 2px; text-decoration-skip-ink: none; }
article .sm { font-size: 13px; line-height: 15px; }
article .r { text-align: right; }
article .gapped { margin-bottom: 19px; }
.docscroll { width: 17px; padding: 16px 0; }
.docscroll .chev { width: 12px; height: 12px; }
.docscroll .thumb { flex: 37; }
.docscroll .rest { flex: 547; }

footer { flex: none; height: 23px; padding: 4px 2px; background: #f0f0f0; border-top: 1px solid #c8c8c8; }

/* Destination dialog */
.overlay { position: fixed; inset: 0; display: grid; place-items: center; padding: 2px 0 0 1px; }
.dialog {
  width: 513px;
  border: 1px solid #1a5fb4;
  background: #f1f1f1;
  box-shadow: 0 0 8px rgba(43, 87, 154, .6);
}
.dialog header { display: flex; justify-content: space-between; height: 31px; padding: 8px 14px 0 11px; background: #2b579a; color: #fff; }
.dialog h2 { font-size: 11px; line-height: 20px; }
.dialog header button { align-self: flex-start; }
.dialog form {
  display: grid;
  grid-template-columns: 118px 1fr 75px;
  column-gap: 11px;
  row-gap: 11px;
  padding: 9px 18px 20px 18px;
  font: 11px/14px Roboto, "Liberation Sans", sans-serif;
}
.dialog p { grid-column: 1 / -1; line-height: 16px; margin-bottom: -2px; }
.dialog label { line-height: 18px; margin-right: -11px; }
.dialog a { grid-column: 1 / 3; padding: 2px; color: #0a66c8; }
.dialog input { min-width: 0; height: 23px; margin-left: -11px; padding: 0 4px 4px; border: 1px solid #d0d0d0; background: #f0f0f0; color: #444; font: 11px Roboto, "Liberation Sans", sans-serif; box-shadow: inset 0 0 0 1px #fff; }
.dialog form button { height: 23px; border: 1px solid #aaa; background: #fdfdfd; }
.dialog form .browse { background: #cdcdcd; }
```
